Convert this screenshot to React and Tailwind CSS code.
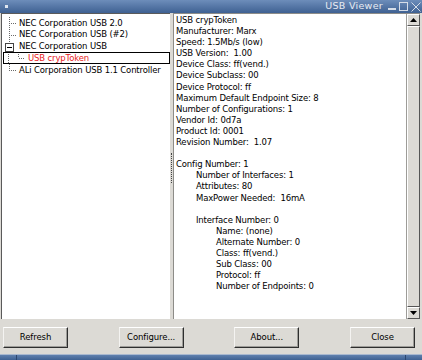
import React from "react";

const font = { fontFamily: '"DejaVu Sans", Verdana, sans-serif' };

const details = [
  [0, "USB crypToken"],
  [0, "Manufacturer: Marx"],
  [0, "Speed: 1.5Mb/s (low)"],
  [0, "USB Version:  1.00"],
  [0, "Device Class: ff(vend.)"],
  [0, "Device Subclass: 00"],
  [0, "Device Protocol: ff"],
  [0, "Maximum Default Endpoint Size: 8"],
  [0, "Number of Configurations: 1"],
  [0, "Vendor Id: 0d7a"],
  [0, "Product Id: 0001"],
  [0, "Revision Number:  1.07"],
  [0, ""],
  [0, "Config Number: 1"],
  [1, "Number of Interfaces: 1"],
  [1, "Attributes: 80"],
  [1, "MaxPower Needed:  16mA"],
  [0, ""],
  [1, "Interface Number: 0"],
  [2, "Name: (none)"],
  [2, "Alternate Number: 0"],
  [2, "Class: ff(vend.)"],
  [2, "Sub Class: 00"],
  [2, "Protocol: ff"],
  [2, "Number of Endpoints: 0"],
];

const indent = ["pl-0", "pl-[20px]", "pl-[40px]"];

// tree connector drawings, one per row
const Connector = ({ kind }) => {
  const dot = { stroke: "#6a6a6a", strokeWidth: 1, strokeDasharray: "1 1" };
  if (kind === "leaf")
    return (
      <svg width="15" height="12" className="shrink-0">
        <line x1="6.5" y1="0" x2="6.5" y2="12" style={dot} />
        <line x1="8" y1="6.5" x2="13" y2="6.5" style={dot} />
      </svg>
    );
  if (kind === "last")
    return (
      <svg width="15" height="12" className="shrink-0">
        <line x1="6.5" y1="0" x2="6.5" y2="7" style={dot} />
        <line x1="8" y1="6.5" x2="13" y2="6.5" style={dot} />
      </svg>
    );
  if (kind === "open")
    return (
      <svg width="15" height="12" className="shrink-0">
        <line x1="6.5" y1="0" x2="6.5" y2="2" style={dot} />
        <rect x="2.5" y="2.5" width="8" height="8" fill="#fff" stroke="#444" />
        <line x1="4" y1="6.5" x2="9" y2="6.5" stroke="#000" />
        <line x1="6.5" y1="11" x2="6.5" y2="12" style={dot} />
      </svg>
    );
  return (
    <svg width="24" height="12" className="shrink-0">
      <line x1="5.5" y1="0" x2="5.5" y2="12" style={dot} />
      <line x1="15.5" y1="0" x2="15.5" y2="6" style={dot} />
      <line x1="16" y1="6.5" x2="22" y2="6.5" style={dot} />
    </svg>
  );
};

const TreeRow = ({ kind, label, selected }) => (
  <div
    className={
      "flex items-center h-[11.8px] whitespace-nowrap " +
      (selected ? "outline outline-1 outline-black -outline-offset-1 text-[#e8221c]" : "text-black")
    }
  >
    <Connector kind={kind} />
    <span className={selected ? "pl-[1px]" : "pl-[1px]"}>{label}</span>
  </div>
);

const Button = ({ children }) => (
  <button className="w-[65px] h-[21px] bg-[#dcdad5] border border-t-white border-l-[#f4f3f1] border-b-[#2e2e2e] border-r-[#2e2e2e] shadow-[inset_-1px_-1px_0_#9d9c98] text-[8.5px] tracking-[-0.1px] text-black">
    {children}
  </button>
);

const Triangle = ({ up }) => (
  <svg width="7" height="4">
    <polygon points={up ? "0,4 7,4 3.5,0" : "0,0 7,0 3.5,4"} fill="#000" />
  </svg>
);

export default function App() {
  return (
    <div className="w-[422px] h-[360px] flex flex-col bg-[#dcdad5] overflow-hidden text-[8.5px] tracking-[-0.15px]" style={font}>
      {/* title bar */}
      <div className="h-[13px] flex items-center bg-gradient-to-b from-[#6d8dba] to-[#3f6192] text-[#e8ecf2] shrink-0">
        <div className="w-[3px] h-[3px] bg-[#dfe6f0] ml-[5px]" />
        <div className="flex-1" />
        <span className="text-[9.5px] tracking-[0.3px] mr-[5px]">USB Viewer</span>
        <div className="flex items-center gap-[3px] mr-[1px]">
          <div className="w-[8px] h-[11px] flex items-end pb-[2px]">
            <div className="w-[8px] h-[2px] bg-[#d6dde8]" />
          </div>
          <div className="w-[9px] h-[9px] border border-[#d6dde8]" />
          <svg width="10" height="10">
            <line x1="0.5" y1="0.5" x2="9.5" y2="9.5" stroke="#d6dde8" />
            <line x1="9.5" y1="0.5" x2="0.5" y2="9.5" stroke="#d6dde8" />
          </svg>
        </div>
      </div>

      {/* panes */}
      <div className="flex h-[306px] shrink-0">
        <div className="w-[169px] ml-[1px] bg-white border-l border-t border-[#5a5a5a] pt-[3px] pl-[1px]">
          <TreeRow kind="leaf" label="NEC Corporation USB 2.0" />
          <TreeRow kind="leaf" label="NEC Corporation USB (#2)" />
          <TreeRow kind="open" label="NEC Corporation USB" />
          <TreeRow kind="child" label="USB crypToken" selected />
          <TreeRow kind="last" label="ALi Corporation USB 1.1 Controller" />
        </div>
        <div className="w-[3px] flex flex-col items-center">
          <div className="h-[30px] w-[1px] mt-[140px] border-l border-dotted border-[#444]" />
        </div>
        <div className="flex-1 flex bg-white border-t border-l border-[#8d8c88] mr-[2px]">
          <div className="flex-1 pl-[2px] pt-[1px] leading-[11.1px] text-black whitespace-pre">
            {details.map(([lvl, txt], i) => (
              <div key={i} className={"h-[11.1px] " + indent[lvl]}>
                {txt}
              </div>
            ))}
          </div>
          <div className="w-[14px] bg-[#dcdad5] border-l border-[#9d9c98] flex flex-col">
            <div className="h-[12px] flex items-center justify-center border border-t-white border-l-white border-b-[#555] border-r-[#555]">
              <Triangle up />
            </div>
            <div className="flex-1 bg-[#dcdad5] border border-t-white border-l-white border-b-[#555] border-r-[#555]" />
            <div className="h-[12px] flex items-center justify-center border border-t-white border-l-white border-b-[#555] border-r-[#555]">
              <Triangle />
            </div>
          </div>
        </div>
      </div>

      {/* buttons */}
      <div className="h-[35px] flex items-start justify-between pt-[8px] pl-[3px] pr-[7px] shrink-0">
        <Button>Refresh</Button>
        <Button>Configure...</Button>
        <Button>About...</Button>
        <Button>Close</Button>
      </div>

      {/* bottom frame */}
      <div className="flex-1 flex bg-gradient-to-b from-[#5f80ae] to-[#3f6192] border-t border-[#a9b8cf]">
        <div className="w-[17px] border-r border-[#2c4770]" />
        <div className="flex-1" />
        <div className="w-[17px] border-l border-[#2c4770]" />
      </div>
    </div>
  );
}
